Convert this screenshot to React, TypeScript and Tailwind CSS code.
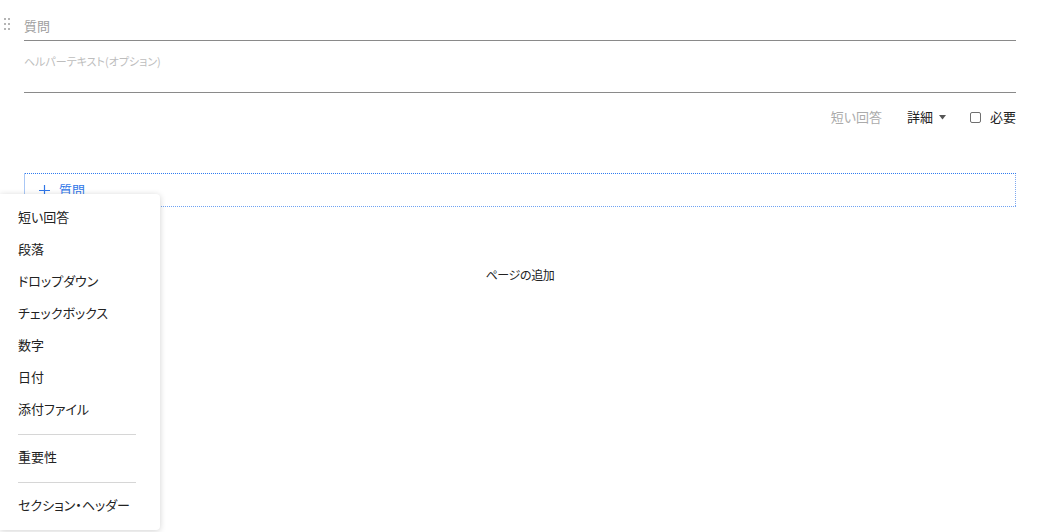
const font = { fontFamily: '"Noto Sans CJK JP", "Noto Sans", sans-serif' }

const menuTypes = ['短い回答', '段落', 'ドロップダウン', 'チェックボックス', '数字', '日付', '添付ファイル']

function Grip() {
  return (
    <div className="grid grid-cols-2 gap-x-[2px] gap-y-[3px] w-[6px] mt-[18px] ml-[4px]">
      {[0, 1, 2, 3, 4, 5].map(i => (
        <span key={i} className="block w-[2px] h-[2px] bg-[#b5b5b5]" />
      ))}
    </div>
  )
}

export default function App() {
  return (
    <div
      className="relative w-[1047px] h-[532px] bg-white text-[#222] overflow-hidden [font-feature-settings:'palt']"
      style={font}
    >
      <div className="flex">
        {/* drag handle column */}
        <div className="w-[24px] shrink-0">
          <Grip />
        </div>

        <div className="flex-1 pr-[31px]">
          {/* question title */}
          <div className="mt-[12px] h-[29px] border-b border-[#8a8a8a] text-[13px] leading-[28px] text-[#9e9e9e]">
            質問
          </div>

          {/* helper text */}
          <div className="h-[52px] border-b border-[#8a8a8a] pt-[12px] text-[11px] leading-[16px] text-[#bdbdbd]">
            ヘルパーテキスト(オプション)
          </div>

          {/* toolbar */}
          <div className="mt-[10px] h-[28px] flex items-center justify-end text-[13px]">
            <span className="text-[#ababab]">短い回答</span>
            <span className="ml-[25px] flex items-center text-[#222]">
              詳細
              <svg width="7" height="5" viewBox="0 0 7 5" className="ml-[6px] mt-[1px]">
                <path d="M0 0 L7 0 L3.5 4.5 Z" fill="#555" />
              </svg>
            </span>
            <span className="ml-[24px] w-[11px] h-[11px] border border-[#6f6f6f] rounded-[2px]" />
            <span className="ml-[9px]">必要</span>
          </div>

          {/* add question box: dotted edges drawn as 1px-on/1px-off stripes */}
          <div className="mt-[42px] h-[34px] border-l border-[#a9c7f5] bg-no-repeat [background-image:repeating-linear-gradient(90deg,#2f7bf0_0_1px,transparent_1px_2px),repeating-linear-gradient(90deg,#6ea2f2_0_1px,transparent_1px_2px),repeating-linear-gradient(180deg,#7ea8ee_0_1px,transparent_1px_2px)] [background-size:100%_1px,100%_1px,1px_100%] [background-position:top_left,bottom_left,top_right] flex items-center pl-[14px] text-[13px] text-[#2f76e8]">
            <svg width="11" height="11" viewBox="0 0 11 11" className="mr-[9px]">
              <path d="M5.5 0 V11 M0 5.5 H11" stroke="#2f76e8" strokeWidth="1.2" />
            </svg>
            質問
          </div>

          {/* add page */}
          <div className="mt-[60px] text-center text-[12px] leading-[16px] tracking-[-0.03em] text-[#222]">
            ページの追加
          </div>
        </div>
      </div>

      {/* question type menu */}
      <div className="absolute left-0 top-[194px] w-[160px] bg-white rounded-r-[4px] shadow-[0_1px_6px_rgba(0,0,0,0.18)] pt-[7px] pb-[9px] text-[13px] text-[#222] whitespace-nowrap">
        {menuTypes.map(t => (
          <div key={t} className="h-[32px] flex items-center px-[18px]">{t}</div>
        ))}
        <div className="mx-[18px] w-[118px] h-px bg-[#d6d6d6] mt-[9px] mb-[6px]" />
        <div className="h-[32px] flex items-center px-[18px]">重要性</div>
        <div className="mx-[18px] w-[118px] h-px bg-[#d6d6d6] mt-[9px] mb-[6px]" />
        <div className="h-[32px] flex items-center px-[18px]">セクション・ヘッダー</div>
      </div>
    </div>
  )
}
